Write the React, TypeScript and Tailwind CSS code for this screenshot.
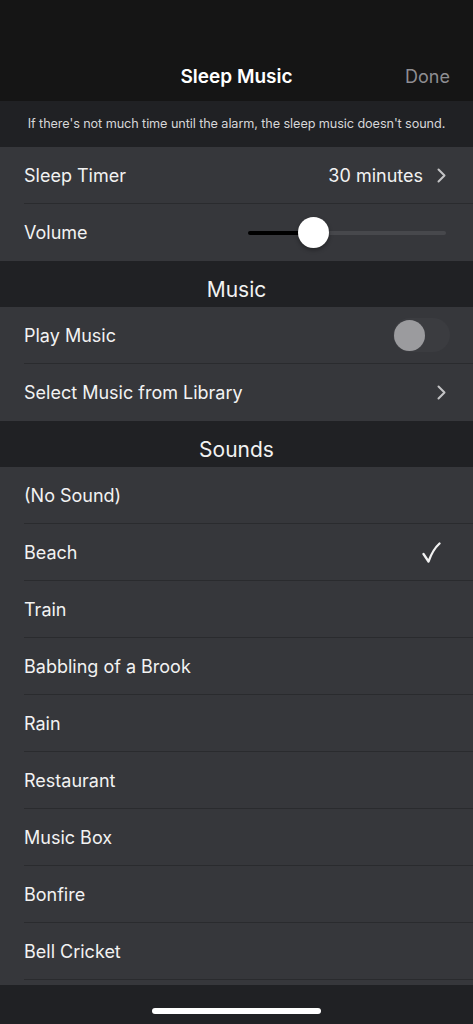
import React from 'react'

const font = { fontFamily: 'Inter, "Liberation Sans", sans-serif' }

function Chevron() {
  return (
    <svg width="9" height="15" viewBox="0 0 9 15" fill="none" className="shrink-0">
      <path d="M1.5 1.5L7.5 7.5L1.5 13.5" stroke="#c4c4c6" strokeWidth="2" strokeLinecap="round" strokeLinejoin="round" />
    </svg>
  )
}

function Row({ children, last }: { children: React.ReactNode; last?: boolean }) {
  return (
    <div className="bg-[#36373b] pl-6">
      <div
        className={`flex h-[57px] items-center pr-[27px] ${last ? '' : 'border-b border-[#2a2b2e]'}`}
      >
        {children}
      </div>
    </div>
  )
}

function SectionHeader({ title }: { title: string }) {
  return (
    <div className="flex h-[46px] items-center justify-center bg-[#202124] pt-[11px] text-[21px] text-[#f2f2f2]">
      {title}
    </div>
  )
}

const sounds = [
  '(No Sound)',
  'Beach',
  'Train',
  'Babbling of a Brook',
  'Rain',
  'Restaurant',
  'Music Box',
  'Bonfire',
  'Bell Cricket',
]

export default function App() {
  return (
    <div className="relative flex h-[1024px] w-[473px] flex-col overflow-hidden bg-[#202124]" style={font}>
      {/* nav bar */}
      <div className="relative flex h-[101px] shrink-0 items-end justify-center bg-[#151515] pb-[10px]">
        <span className="text-[19px] font-semibold text-white">Sleep Music</span>
        <span className="absolute bottom-[11px] right-[23px] text-[18px] text-[#8e8e92]">Done</span>
      </div>

      <div className="flex h-[46px] shrink-0 items-center justify-center bg-[#202124] text-[12.7px] tracking-[-0.1px] text-[#d6d6d8]">
        If there's not much time until the alarm, the sleep music doesn't sound.
      </div>

      <div className="text-[18px] text-[#f2f2f2]">
        <Row>
          <span className="flex-1">Sleep Timer</span>
          <span className="mr-[14px]">30 minutes</span>
          <Chevron />
        </Row>
        <Row last>
          <span className="flex-1">Volume</span>
          <div className="relative flex h-[31px] w-[198px] items-center">
            <div className="h-[4px] w-[65px] rounded-l-full bg-black" />
            <div className="h-[4px] flex-1 rounded-r-full bg-[#47484c]" />
            <div className="absolute left-[50px] top-0 h-[31px] w-[31px] rounded-full bg-white shadow-[0_2px_4px_rgba(0,0,0,0.35)]" />
          </div>
        </Row>

        <SectionHeader title="Music" />
        <Row>
          <span className="flex-1">Play Music</span>
          <div className="mr-[-4px] flex h-[34px] w-[57px] items-center rounded-full bg-[#3b3c40] pl-[1px]">
            <div className="h-[31px] w-[31px] rounded-full bg-[#9b9b9e]" />
          </div>
        </Row>
        <Row last>
          <span className="flex-1">Select Music from Library</span>
          <Chevron />
        </Row>

        <SectionHeader title="Sounds" />
        {sounds.map((s) => (
          <Row key={s}>
            <span className="flex-1">{s}</span>
            {s === 'Beach' && (
              <svg width="19" height="21" viewBox="0 0 19 21" fill="none" className="mr-[5px]">
                <path d="M1.5 12L6.5 19.5C9 12.5 12.5 6 17.5 1.5" stroke="#f2f2f2" strokeWidth="2.3" strokeLinecap="round" strokeLinejoin="round" />
              </svg>
            )}
          </Row>
        ))}
        <div className="h-[6px] bg-[#36373b]" />
      </div>

      {/* home indicator bar */}
      <div className="absolute bottom-0 left-0 flex h-[39px] w-full items-start justify-center bg-[#202124] pt-[23px]">
        <div className="h-[6px] w-[169px] rounded-full bg-white" />
      </div>
    </div>
  )
}
